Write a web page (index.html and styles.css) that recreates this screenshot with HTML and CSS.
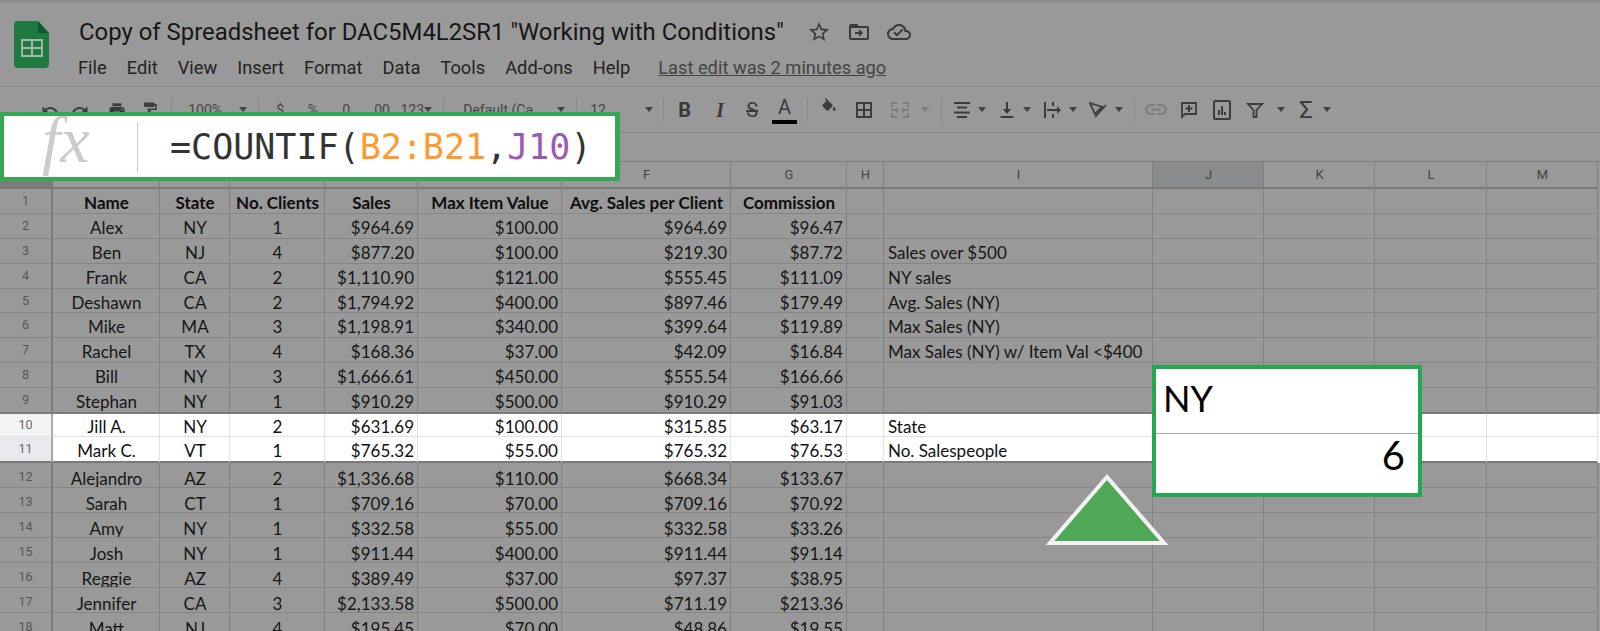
FILE: index.html
```html
<!DOCTYPE html>
<html lang="en">
<head>
<meta charset="utf-8">
<title>Copy of Spreadsheet for DAC5M4L2SR1</title>
<link rel="stylesheet" href="styles.css">
</head>
<body>
<div class="app">
  <header class="head">
    <svg class="logo" viewBox="0 0 35 47"><path class="logo-doc" d="M4 0h20l11 12v31a4 4 0 0 1-4 4H4a4 4 0 0 1-4-4V4a4 4 0 0 1 4-4z"/><path class="logo-fold" d="M24 0l11 12H24z"/><path class="logo-table" d="M7 18h22v18H7zM9 20v6h8v-6zm10 0v6h8v-6zM9 28v6h8v-6zm10 0v6h8v-6z" fill-rule="evenodd"/></svg>
    <div class="titles">
      <div class="title-row">
        <span class="title">Copy of Spreadsheet for DAC5M4L2SR1 "Working with Conditions"</span>
        <svg class="ticon star" viewBox="0 0 24 24"><path d="M22 9.24l-7.19-.62L12 2 9.19 8.63 2 9.24l5.46 4.73L5.82 21 12 17.27 18.18 21l-1.63-7.03L22 9.24zM12 15.4l-3.76 2.27 1-4.28-3.32-2.88 4.38-.38L12 6.1l1.71 4.04 4.38.38-3.32 2.88 1 4.28L12 15.4z"/></svg>
        <svg class="ticon" viewBox="0 0 24 24"><path d="M20 6h-8l-2-2H4c-1.100 0-2 .9-2 2v12c0 1.100.9 2 2 2h16c1.100 0 2-.9 2-2V8c0-1.100-.9-2-2-2zm0 12H4V8h16v10zm-8-1l4-4-4-4v3H8v2h4v3z"/></svg>
        <svg class="ticon" viewBox="0 0 24 24"><path d="M19.350 10.040C18.670 6.590 15.640 4 12 4 9.110 4 6.600 5.640 5.350 8.040 2.340 8.360 0 10.910 0 14c0 3.310 2.690 6 6 6h13c2.760 0 5-2.240 5-5 0-2.640-2.050-4.780-4.650-4.960zM19 18H6c-2.210 0-4-1.790-4-4s1.790-4 4-4h.71C7.370 7.690 9.480 6 12 6c3.040 0 5.500 2.460 5.500 5.500v.5H19c1.660 0 3 1.340 3 3s-1.340 3-3 3zm-9-1.500l-3.500-3.500 1.410-1.410L10 13.670l5.090-5.090L16.500 10z"/></svg>
      </div>
      <nav class="menu">
        <span>File</span><span>Edit</span><span>View</span><span>Insert</span><span>Format</span><span>Data</span><span>Tools</span><span>Add-ons</span><span>Help</span>
        <a class="last-edit">Last edit was 2 minutes ago</a>
      </nav>
    </div>
  </header>

  <div class="toolbar">
    <svg class="ic" viewBox="0 0 24 24"><path d="M12.5 8c-2.65 0-5.05.99-6.9 2.600L2 7v9h9l-3.620-3.620c1.390-1.160 3.160-1.880 5.120-1.880 3.540 0 6.550 2.310 7.600 5.500l2.370-.78C21.080 11.030 17.150 8 12.500 8z"/></svg>
    <svg class="ic" viewBox="0 0 24 24"><path d="M18.400 10.600C16.550 8.990 14.150 8 11.500 8c-4.650 0-8.580 3.030-9.960 7.220L3.900 16c1.050-3.190 4.050-5.500 7.600-5.500 1.950 0 3.730.72 5.120 1.880L13 16h9V7l-3.600 3.600z"/></svg>
    <svg class="ic" viewBox="0 0 24 24"><path d="M19 8H5c-1.660 0-3 1.340-3 3v6h4v4h12v-4h4v-6c0-1.660-1.340-3-3-3zm-3 11H8v-5h8v5zm3-7c-.55 0-1-.45-1-1s.45-1 1-1 1 .45 1 1-.45 1-1 1zm-1-9H6v4h12V3z"/></svg>
    <svg class="ic" viewBox="0 0 24 24"><path d="M18 4V3c0-.55-.45-1-1-1H5c-.55 0-1 .45-1 1v4c0 .55.45 1 1 1h12c.55 0 1-.45 1-1V6h1v4H9v11c0 .55.45 1 1 1h2c.55 0 1-.45 1-1v-9h8V4h-3z"/></svg>
    <i class="sep"></i>
    <span class="tt">100%</span><b class="ar"></b><i class="sep"></i>
    <span class="tt">$</span><span class="tt">%</span><span class="tt">.0</span><span class="tt">.00</span><span class="tt">123</span><b class="ar"></b><i class="sep"></i>
    <span class="tt">Default (Ca</span><b class="ar"></b><i class="sep"></i>
    <span class="tt">12</span><b class="ar"></b><i class="sep"></i>
    <span class="fmt bold">B</span><span class="fmt ital">I</span><span class="fmt strike">S</span><span class="fmt color">A</span><i class="sep"></i>
    <svg class="ic up" viewBox="0 0 24 24"><path d="M16.560 8.940L7.620 0 6.210 1.410l2.380 2.380-5.150 5.150c-.59.59-.59 1.540 0 2.120l5.500 5.500c.29.29.68.44 1.060.44s.77-.15 1.060-.44l5.500-5.500c.59-.58.59-1.530 0-2.120zM19 11.500s-2 2.170-2 3.500c0 1.100.9 2 2 2s2-.9 2-2c0-1.330-2-3.500-2-3.500z"/></svg>
    <svg class="ic" viewBox="0 0 18 18"><path fill-rule="evenodd" d="M1 1h16v16H1zM3 3v5h5V3zm7 0v5h5V3zM3 10v5h5v-5zm7 0v5h5v-5z"/></svg>
    <svg class="ic wide dim" viewBox="0 0 20 18"><path d="M1 1h6v2H3v3H1zm12 0h6v5h-2V3h-4zM1 12h2v3h4v2H1zm16 0h2v5h-6v-2h4zM1 8h5V6l3 3-3 3v-2H1zm18 0h-5V6l-3 3 3 3v-2h5z"/></svg>
    <b class="ar dimar"></b><i class="sep"></i>
    <svg class="ic" viewBox="0 0 18 18"><path d="M1 1h16v2H1zM4 5.500h10v2H4zM1 10.500h16v2H1zM4 15h10v2H4z"/></svg><b class="ar"></b>
    <svg class="ic" viewBox="0 0 18 18"><path d="M2.500 15h13v2h-13zM8 1h2v7h3l-4 5-4-5h3z"/></svg><b class="ar"></b>
    <svg class="ic" viewBox="0 0 18 18"><path d="M0 1h2v16H0zM8 1h2v4H8zM8 13h2v4H8zM3 8h10V5l4 4-4 4v-3H3z"/></svg><b class="ar"></b>
    <svg class="ic" viewBox="0 0 18 18"><path class="st" d="M1 2l12 4-7 7zM17 4L6 16"/></svg><b class="ar"></b>
    <i class="sep"></i>
    <svg class="ic link dim" viewBox="2 7 20 10"><path d="M3.900 12c0-1.710 1.390-3.100 3.100-3.100h4V7H7c-2.760 0-5 2.240-5 5s2.240 5 5 5h4v-1.900H7c-1.710 0-3.100-1.390-3.100-3.100zM8 13h8v-2H8v2zm9-6h-4v1.900h4c1.710 0 3.100 1.390 3.100 3.100s-1.390 3.100-3.100 3.100h-4V17h4c2.760 0 5-2.240 5-5s-2.240-5-5-5z"/></svg>
    <svg class="ic" viewBox="0 0 18 18"><path class="st" d="M2 2h14v11H5l-3 3z"/><path d="M8 4h2v2.500h2.500v2H10V11H8V8.500H5.500v-2H8z"/></svg>
    <svg class="ic big" viewBox="0 0 18 20"><path class="st st2" d="M1 2.500a1.500 1.500 0 0 1 1.500-1.500h13a1.500 1.500 0 0 1 1.500 1.500v15a1.500 1.500 0 0 1-1.500 1.500h-13a1.500 1.500 0 0 1-1.500-1.500z"/><path d="M5 10h2v5H5zm3-4h2v9H8zm3 6h2v3h-2z"/></svg>
    <svg class="ic" viewBox="0 0 18 18"><path class="st" d="M2 3h14l-5.500 6V16h-3V9z"/></svg><b class="ar"></b>
    <span class="fmt sigma">Σ</span><b class="ar"></b>
  </div>

  <div class="formula-strip"></div>

  <div class="grid">
    <div class="row hdr"><span class="rn corner"></span><span>A</span><span>B</span><span>C</span><span>D</span><span>E</span><span>F</span><span>G</span><span>H</span><span>I</span><span class="active">J</span><span>K</span><span>L</span><span>M</span></div>
    <div class="row first bolds"><span class="rn">1</span><span class="c">Name</span><span class="c">State</span><span class="c">No. Clients</span><span class="c">Sales</span><span class="c">Max Item Value</span><span class="c">Avg. Sales per Client</span><span class="c">Commission</span><span></span><span></span><span></span><span></span><span></span><span></span></div>
    <div class="row first"><span class="rn">2</span><span class="c">Alex</span><span class="c">NY</span><span class="c">1</span><span class="r">$964.69</span><span class="r">$100.00</span><span class="r">$964.69</span><span class="r">$96.47</span><span></span><span></span><span></span><span></span><span></span><span></span></div>
    <div class="row"><span class="rn">3</span><span class="c">Ben</span><span class="c">NJ</span><span class="c">4</span><span class="r">$877.20</span><span class="r">$100.00</span><span class="r">$219.30</span><span class="r">$87.72</span><span></span><span class="l">Sales over $500</span><span></span><span></span><span></span><span></span></div>
    <div class="row"><span class="rn">4</span><span class="c">Frank</span><span class="c">CA</span><span class="c">2</span><span class="r">$1,110.90</span><span class="r">$121.00</span><span class="r">$555.45</span><span class="r">$111.09</span><span></span><span class="l">NY sales</span><span></span><span></span><span></span><span></span></div>
    <div class="row"><span class="rn">5</span><span class="c">Deshawn</span><span class="c">CA</span><span class="c">2</span><span class="r">$1,794.92</span><span class="r">$400.00</span><span class="r">$897.46</span><span class="r">$179.49</span><span></span><span class="l">Avg. Sales (NY)</span><span></span><span></span><span></span><span></span></div>
    <div class="row"><span class="rn">6</span><span class="c">Mike</span><span class="c">MA</span><span class="c">3</span><span class="r">$1,198.91</span><span class="r">$340.00</span><span class="r">$399.64</span><span class="r">$119.89</span><span></span><span class="l">Max Sales (NY)</span><span></span><span></span><span></span><span></span></div>
    <div class="row"><span class="rn">7</span><span class="c">Rachel</span><span class="c">TX</span><span class="c">4</span><span class="r">$168.36</span><span class="r">$37.00</span><span class="r">$42.09</span><span class="r">$16.84</span><span></span><span class="l">Max Sales (NY) w/ Item Val &lt;$400</span><span></span><span></span><span></span><span></span></div>
    <div class="row"><span class="rn">8</span><span class="c">Bill</span><span class="c">NY</span><span class="c">3</span><span class="r">$1,666.61</span><span class="r">$450.00</span><span class="r">$555.54</span><span class="r">$166.66</span><span></span><span></span><span></span><span></span><span></span><span></span></div>
    <div class="row before-lit"><span class="rn">9</span><span class="c">Stephan</span><span class="c">NY</span><span class="c">1</span><span class="r">$910.29</span><span class="r">$500.00</span><span class="r">$910.29</span><span class="r">$91.03</span><span></span><span></span><span></span><span></span><span></span><span></span></div>
    <div class="row lit lit-a"><span class="rn">10</span><span class="c">Jill A.</span><span class="c">NY</span><span class="c">2</span><span class="r">$631.69</span><span class="r">$100.00</span><span class="r">$315.85</span><span class="r">$63.17</span><span></span><span class="l">State</span><span></span><span></span><span></span><span></span></div>
    <div class="row lit lit-b"><span class="rn">11</span><span class="c">Mark C.</span><span class="c">VT</span><span class="c">1</span><span class="r">$765.32</span><span class="r">$55.00</span><span class="r">$765.32</span><span class="r">$76.53</span><span></span><span class="l">No. Salespeople</span><span></span><span></span><span></span><span></span></div>
    <div class="row"><span class="rn">12</span><span class="c">Alejandro</span><span class="c">AZ</span><span class="c">2</span><span class="r">$1,336.68</span><span class="r">$110.00</span><span class="r">$668.34</span><span class="r">$133.67</span><span></span><span></span><span></span><span></span><span></span><span></span></div>
    <div class="row"><span class="rn">13</span><span class="c">Sarah</span><span class="c">CT</span><span class="c">1</span><span class="r">$709.16</span><span class="r">$70.00</span><span class="r">$709.16</span><span class="r">$70.92</span><span></span><span></span><span></span><span></span><span></span><span></span></div>
    <div class="row"><span class="rn">14</span><span class="c">Amy</span><span class="c">NY</span><span class="c">1</span><span class="r">$332.58</span><span class="r">$55.00</span><span class="r">$332.58</span><span class="r">$33.26</span><span></span><span></span><span></span><span></span><span></span><span></span></div>
    <div class="row"><span class="rn">15</span><span class="c">Josh</span><span class="c">NY</span><span class="c">1</span><span class="r">$911.44</span><span class="r">$400.00</span><span class="r">$911.44</span><span class="r">$91.14</span><span></span><span></span><span></span><span></span><span></span><span></span></div>
    <div class="row"><span class="rn">16</span><span class="c">Reggie</span><span class="c">AZ</span><span class="c">4</span><span class="r">$389.49</span><span class="r">$37.00</span><span class="r">$97.37</span><span class="r">$38.95</span><span></span><span></span><span></span><span></span><span></span><span></span></div>
    <div class="row"><span class="rn">17</span><span class="c">Jennifer</span><span class="c">CA</span><span class="c">3</span><span class="r">$2,133.58</span><span class="r">$500.00</span><span class="r">$711.19</span><span class="r">$213.36</span><span></span><span></span><span></span><span></span><span></span><span></span></div>
    <div class="row"><span class="rn">18</span><span class="c">Matt</span><span class="c">NJ</span><span class="c">4</span><span class="r">$195.45</span><span class="r">$70.00</span><span class="r">$48.86</span><span class="r">$19.55</span><span></span><span></span><span></span><span></span><span></span><span></span></div>
  </div>

  <div class="formula-callout">
    <span class="fx">fx</span>
    <i class="fx-sep"></i>
    <code class="formula">=COUNTIF(<span class="ref-b">B2:B21</span>,<span class="ref-j">J10</span>)</code>
  </div>

  <div class="cell-callout">
    <div class="cc-top">NY</div>
    <div class="cc-bottom">6</div>
  </div>

  <svg class="pointer" viewBox="0 0 126 72"><path class="pointer-shape" d="M63 4L120 70H6z"/></svg>
</div>
</body>
</html>
```
FILE: styles.css
```css
* { box-sizing: border-box; }
html, body { margin: 0; height: 100%; }
body { background: #999; overflow: hidden; font-family: Roboto, sans-serif; }
.app { position: relative; width: 1600px; height: 631px; overflow: hidden; border-top: 3px solid #8c8c8c; }

.head { display: flex; height: 84px; padding: 18px 0 0 14px; border-bottom: 1px solid #888; }
.logo { width: 35px; height: 47px; flex: none; }
.logo-doc { fill: #1e7a41; }
.logo-fold { fill: #14592e; }
.logo-table { fill: #a6b5aa; }
.titles { margin-left: 30px; display: flex; flex-direction: column; margin-top: -3px; }
.title-row { display: flex; align-items: center; height: 30px; margin-top: -1px; }
.title { font-size: 23.9px; color: #171717; white-space: nowrap; }
.ticon { width: 24px; height: 24px; fill: #3a3a3a; margin-left: 16px; flex: none; }
.ticon.star { margin-left: 23px; }
.menu { display: flex; align-items: center; gap: 20px; margin: 8px 0 0 -1px; height: 24px; font-size: 18.3px; color: #232323; white-space: nowrap; }
.last-edit { margin-left: 8px; color: #444; text-decoration: underline; }

.toolbar { display: grid; height: 46px; align-items: center; justify-items: end; border-bottom: 1px solid #888;
  grid-template-columns: 59px 30px 37px 33px 13px 50px 25px 12px 25px 34px 32px 40px 34px 8px 12px 89px 32px 12px 29px 47px 11px 27px 33px 34px 39px 11px 30px 35px 37px 19px 13px 29px 15px 30px 15px 31px 15px 30px 16px 12px 32px 31px 33px 33px 21px 28px 18px; }
.ic { width: 18px; height: 18px; fill: #3c3c3c; }
.ic.up { margin-top: -6px; }
.ic.wide { width: 20px; }
.ic.link { width: 22px; height: 11px; }
.ic.big { height: 20px; }
.ic.dim { fill: #7c7c7c; }
.st { fill: none; stroke: #3c3c3c; stroke-width: 1.8; }
.st2 { stroke-width: 2; }
.sep { display: block; width: 1px; height: 26px; background: #8a8a8a; }
.ar { display: block; width: 0; height: 0; border: 4px solid transparent; border-top: 5px solid #444; border-bottom: 0; }
.ar.dimar { border-top-color: #7c7c7c; }
.tt { font-size: 14px; color: #454545; white-space: nowrap; }
.fmt { font-size: 20px; line-height: 24px; color: #3a3a3a; }
.bold { font-weight: 700; }
.ital { font-style: italic; font-family: "Liberation Serif", serif; font-weight: 700; }
.strike { text-decoration: line-through; }
.color { width: 25px; height: 26px; border-bottom: 4px solid #000; text-align: center; line-height: 19px; margin-top: 2px; }
.sigma { font-size: 24px; }

.formula-strip { height: 29px; border-bottom: 1px solid #7c7c7c; }

.row { display: grid; grid-template-columns: 53px 107px 70px 95px 93px 144px 169px 116px 37px 269px 111px 111px 112px 111px 2px; height: 24.75px; }
.row > span { border-right: 1px solid #818181; border-bottom: 1px solid #868686; white-space: nowrap; font-family: Lato, sans-serif; font-size: 17px; line-height: 28px; color: #161616; padding: 0 3px 0 4px; overflow: hidden; }
.row > .rn { border-right: 2px solid #7a7a7a; font-family: Roboto, sans-serif; font-size: 12.5px; font-weight: 400; color: #555; text-align: center; line-height: 23px; padding: 0; }
.c { text-align: center; }
.r { text-align: right; }
.l { text-align: left; }
.row.first { height: 25px; }
.row.hdr { height: 27px; }
.row.hdr > span { font-family: Roboto, sans-serif; font-size: 13px; color: #444; text-align: center; line-height: 26px; border-bottom: 2px solid #7a7a7a; }
.row.hdr > .corner { background: #7c7c7c; }
.row.hdr > .active { background: #8a8c8e; }
.bolds > span { font-weight: 700; color: #0e0e0e; }
.before-lit { height: 26.75px; }
.before-lit > span { border-bottom: 2px solid #7a7a7a; }
.lit { background: #fff; }
.lit > span { border-right-color: #e2e2e2; border-bottom-color: #e2e2e2; color: #111; }
.lit-a { height: 23px; }
.lit-a > span { line-height: 25px; }
.lit-a > .rn { background: #f3f4f6; color: #666; border-right-color: #aaa; line-height: 21px; }
.lit-b { height: 26px; }
.lit-b > span { border-bottom: 2px solid #7a7a7a; line-height: 28px; }
.lit-b > .rn { background: #e8eaed; color: #666; border-right-color: #aaa; line-height: 24px; }
.lit-b ~ .row { height: 25px; }
.lit-b ~ .row > span { line-height: 31px; }
.lit-b ~ .row > .rn { line-height: 27px; }

.formula-callout { position: absolute; left: 0; top: 109px; width: 620px; height: 69px; background: #fff; border: 4px solid #34a853; border-right-width: 5px; display: flex; align-items: center; overflow: hidden; }
.fx { font-family: "Liberation Serif", serif; font-style: italic; font-size: 66px; line-height: 60px; color: #ccc; margin: -14px 0 0 38px; width: 95px; }
.fx-sep { display: block; width: 1px; height: 50px; background: #ccc; }
.formula { font-family: "DejaVu Sans Mono", monospace; font-size: 35px; color: #333; margin-left: 32px; white-space: nowrap; }
.ref-b { color: #ff9a2e; }
.ref-j { color: #9b59b6; }

.cell-callout { position: absolute; left: 1152px; top: 362px; width: 270px; height: 132px; background: #fff; border: 4px solid #22a84f; font-family: Lato, sans-serif; color: #000; }
.cc-top { height: 65px; line-height: 58px; padding-left: 7px; font-size: 36px; border-bottom: 1px solid #a8a8a8; }
.cc-bottom { line-height: 42px; padding-right: 13px; text-align: right; font-size: 40px; }

.pointer { position: absolute; left: 1044px; top: 470px; width: 126px; height: 72px; }
.pointer-shape { fill: #4fa855; stroke: #f2f2f2; stroke-width: 4; }
```
